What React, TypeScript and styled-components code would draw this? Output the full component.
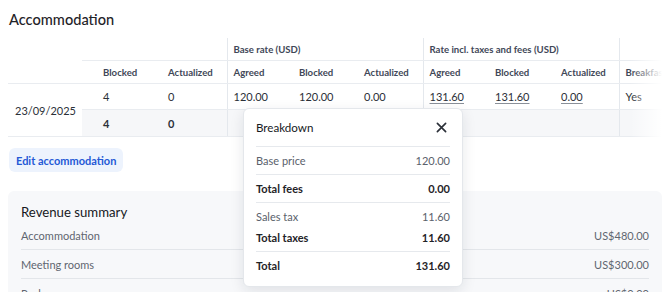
import React from 'react';
import styled, { createGlobalStyle } from 'styled-components';

const GlobalStyle = createGlobalStyle`
  body {
    margin: 0;
    background: #ffffff;
    font-family: Lato, "Noto Sans", sans-serif;
    color: #2b3038;
  }
`;

const Page = styled.div`
  padding: 10px 8px 0 8px;
`;

const Title = styled.h2`
  margin: 0 0 0 1px;
  font-size: 14.6px;
  line-height: 20px;
  font-weight: 500;
  color: #1f2328;
`;

const TableWrap = styled.div`
  position: relative;
  margin-top: 8px;
  margin-right: -8px;
`;

const Scroller = styled.div`
  overflow: hidden;
`;

const Fade = styled.div`
  position: absolute;
  top: 0;
  right: 0;
  width: 40px;
  height: 100px;
  background: linear-gradient(to right, rgba(255, 255, 255, 0), #ffffff 80%);
  pointer-events: none;
`;

const Table = styled.table`
  border-collapse: collapse;
  table-layout: fixed;
  width: 694px;
`;

const Th = styled.th<{ $pl?: number; $vline?: boolean }>`
  height: 22px;
  padding: 0 4px 0 ${(p) => p.$pl ?? 6}px;
  text-align: left;
  font-size: 9.6px;
  font-weight: 700;
  color: #3f4858;
  white-space: nowrap;
  border-bottom: 1px solid #e9ecf0;
  border-left: ${(p) => (p.$vline ? '1px solid #e4e8ed' : 'none')};
`;

const Td = styled.td<{ $pl?: number; $vline?: boolean; $total?: boolean }>`
  height: ${(p) => (p.$total ? 26 : 25)}px;
  padding: 0 4px 0 ${(p) => p.$pl ?? 6}px;
  font-size: 11px;
  color: #2b3038;
  white-space: nowrap;
  background: ${(p) => (p.$total ? '#f6f7f9' : 'transparent')};
  font-weight: ${(p) => (p.$total ? 700 : 400)};
  border-bottom: 1px solid #e9ecf0;
  border-left: ${(p) => (p.$vline ? '1px solid #e4e8ed' : 'none')};
`;

const DateCell = styled.td`
  padding: 0 0 0 7px;
  font-size: 11px;
  color: #2b3038;
  border-bottom: 1px solid #e9ecf0;
`;

const RateLink = styled.a`
  color: #2b3038;
  text-decoration: underline;
  text-underline-offset: 2px;
  text-decoration-color: #8a9099;
  cursor: pointer;
`;

const Popover = styled.div`
  position: absolute;
  left: 235px;
  top: 70px;
  width: 220px;
  box-sizing: border-box;
  padding: 0 12px 7px 12px;
  background: #ffffff;
  border: 1px solid #e4e7eb;
  border-radius: 6px;
  box-shadow: 0 4px 14px rgba(20, 30, 50, 0.1);
  z-index: 5;
`;

const PopHeader = styled.div`
  display: flex;
  align-items: center;
  justify-content: space-between;
  height: 37px;
  border-bottom: 1px solid #e6e9ed;
  font-size: 11.6px;
  font-weight: 400;
  color: #16191d;
`;

const CloseBtn = styled.button`
  display: flex;
  align-items: center;
  justify-content: center;
  padding: 0;
  margin-right: 3px;
  border: none;
  background: none;
  color: #2b3038;
  cursor: pointer;
`;

const PopGroup = styled.div<{ $last?: boolean }>`
  border-bottom: ${(p) => (p.$last ? 'none' : '1px solid #e6e9ed')};
  display: flex;
  flex-direction: column;
  justify-content: center;
  min-height: 27px;
`;

const PopMulti = styled(PopGroup)`
  height: 49px;
  padding: 3px 0;
  box-sizing: border-box;
`;

const PopRow = styled.div<{ $strong?: boolean; $h?: number }>`
  display: flex;
  align-items: center;
  justify-content: space-between;
  height: ${(p) => p.$h ?? 27}px;
  font-size: 11px;
  color: ${(p) => (p.$strong ? '#1f2328' : '#5a616b')};
  font-weight: ${(p) => (p.$strong ? 700 : 400)};
`;

const EditButton = styled.button`
  display: block;
  margin: 11px 0 0 1px;
  height: 24px;
  padding: 0 7px;
  border: none;
  border-radius: 6px;
  background: #edf3fd;
  color: #2459d6;
  font-family: inherit;
  font-size: 11px;
  font-weight: 700;
  cursor: pointer;
`;

const Summary = styled.section`
  margin-top: 19px;
  padding: 12px 13px 0 13px;
  background: #f7f8fa;
  border-radius: 6px;
  height: 120px;
`;

const SummaryTitle = styled.h3`
  margin: 0;
  font-size: 13.2px;
  line-height: 18px;
  font-weight: 400;
  color: #16191d;
`;

const SummaryRow = styled.div`
  display: flex;
  justify-content: space-between;
  align-items: center;
  height: 28px;
  border-bottom: 1px solid #e3e6ea;
  font-size: 11px;
  color: #5f6670;
`;

const widths = [74, 66, 79, 66, 65, 65, 66, 66, 64, 83];

const X = () => (
  <svg width="11" height="11" viewBox="0 0 12 12" fill="none">
    <path d="M1.5 1.5 L10.5 10.5 M10.5 1.5 L1.5 10.5" stroke="currentColor" strokeWidth="1.8" strokeLinecap="round" />
  </svg>
);

export default function App() {
  return (
    <>
      <GlobalStyle />
      <Page>
        <Title>Accommodation</Title>
        <TableWrap>
          <Scroller>
            <Table>
              <colgroup>
                {widths.map((w, i) => (
                  <col key={i} style={{ width: w }} />
                ))}
              </colgroup>
              <thead>
                <tr>
                  <Th rowSpan={2} />
                  <Th colSpan={2} />
                  <Th colSpan={3} $vline>Base rate (USD)</Th>
                  <Th colSpan={3} $vline>Rate incl. taxes and fees (USD)</Th>
                  <Th $vline />
                </tr>
                <tr>
                  <Th $pl={21}>Blocked</Th>
                  <Th $pl={20}>Actualized</Th>
                  <Th $vline>Agreed</Th>
                  <Th>Blocked</Th>
                  <Th>Actualized</Th>
                  <Th $vline>Agreed</Th>
                  <Th>Blocked</Th>
                  <Th>Actualized</Th>
                  <Th $vline>Breakfast</Th>
                </tr>
              </thead>
              <tbody>
                <tr>
                  <DateCell rowSpan={2}>23/09/2025</DateCell>
                  <Td $pl={21}>4</Td>
                  <Td $pl={20}>0</Td>
                  <Td $vline>120.00</Td>
                  <Td>120.00</Td>
                  <Td>0.00</Td>
                  <Td $vline><RateLink>131.60</RateLink></Td>
                  <Td><RateLink>131.60</RateLink></Td>
                  <Td><RateLink>0.00</RateLink></Td>
                  <Td $vline>Yes</Td>
                </tr>
                <tr>
                  <Td $total $pl={21}>4</Td>
                  <Td $total $pl={20}>0</Td>
                  <Td $total $vline />
                  <Td $total />
                  <Td $total />
                  <Td $total $vline />
                  <Td $total />
                  <Td $total />
                  <Td $total $vline />
                </tr>
              </tbody>
            </Table>
          </Scroller>
          <Fade />
          <Popover>
            <PopHeader>
              Breakdown
              <CloseBtn aria-label="Close"><X /></CloseBtn>
            </PopHeader>
            <PopGroup>
              <PopRow>
                <span>Base price</span>
                <span>120.00</span>
              </PopRow>
            </PopGroup>
            <PopGroup>
              <PopRow $strong>
                <span>Total fees</span>
                <span>0.00</span>
              </PopRow>
            </PopGroup>
            <PopMulti>
              <PopRow $h={21}>
                <span>Sales tax</span>
                <span>11.60</span>
              </PopRow>
              <PopRow $strong $h={21}>
                <span>Total taxes</span>
                <span>11.60</span>
              </PopRow>
            </PopMulti>
            <PopGroup $last>
              <PopRow $strong>
                <span>Total</span>
                <span>131.60</span>
              </PopRow>
            </PopGroup>
          </Popover>
        </TableWrap>
        <EditButton>Edit accommodation</EditButton>
        <Summary>
          <SummaryTitle>Revenue summary</SummaryTitle>
          <SummaryRow>
            <span>Accommodation</span>
            <span>US$480.00</span>
          </SummaryRow>
          <SummaryRow>
            <span>Meeting rooms</span>
            <span>US$300.00</span>
          </SummaryRow>
          <SummaryRow>
            <span>Packages</span>
            <span>US$0.00</span>
          </SummaryRow>
        </Summary>
      </Page>
    </>
  );
}
